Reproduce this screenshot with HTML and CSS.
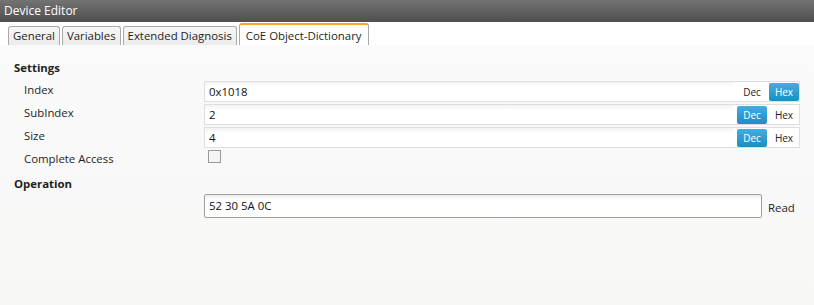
FILE: index.html
```html
<!DOCTYPE html>
<html lang="en">
<head>
    <meta charset="UTF-8">
    <meta name="viewport" content="width=device-width, initial-scale=1.0">
    <title>Device Editor</title>
    <link rel="stylesheet" href="styles.css">
</head>
<body>

<div class="titlebar">Device Editor</div>

<div class="tabs">
    <div class="tab">General</div>
    <div class="tab">Variables</div>
    <div class="tab">Extended Diagnosis</div>
    <div class="tab active">CoE Object-Dictionary</div>
</div>

<div class="content">
    <div class="section-title">Settings</div>

    <div class="row">
        <div class="label">Index</div>
        <div class="field">
            <span class="value">0x1018</span>
            <span class="toggle">
                <span class="btn">Dec</span>
                <span class="btn on">Hex</span>
            </span>
        </div>
    </div>
    <div class="row">
        <div class="label">SubIndex</div>
        <div class="field">
            <span class="value">2</span>
            <span class="toggle">
                <span class="btn on">Dec</span>
                <span class="btn">Hex</span>
            </span>
        </div>
    </div>
    <div class="row">
        <div class="label">Size</div>
        <div class="field">
            <span class="value">4</span>
            <span class="toggle">
                <span class="btn on">Dec</span>
                <span class="btn">Hex</span>
            </span>
        </div>
    </div>
    <div class="row">
        <div class="label">Complete Access</div>
        <div><span class="checkbox"></span></div>
    </div>

    <div class="section-title op-title">Operation</div>

    <div class="op-row">
        <div class="op-input">52 30 5A 0C</div>
        <div class="op-action">Read</div>
    </div>
</div>

</body>
</html>
```

FILE: styles.css
```css
html, body {
    margin: 0;
    height: 100%;
}
body {
    display: flex;
    flex-direction: column;
    font-family: "Open Sans", "Noto Sans", sans-serif;
    font-size: 11.4px;
    color: #1e1e1e;
    background-color: #f8f8f7;
    overflow: hidden;
}
.titlebar {
    height: 22px;
    line-height: 22px;
    padding-left: 4px;
    color: #fff;
    font-size: 12px;
    background: linear-gradient(#737373, #4f4f4f);
}
.tabs {
    display: flex;
    align-items: flex-end;
    height: 23px;
    padding-left: 8px;
    background-color: #fff;
}
.tab {
    height: 18px;
    line-height: 18px;
    padding: 0 4px;
    margin-right: 2px;
    border: 1px solid #a9a9a9;
    border-bottom: none;
    border-radius: 3px 3px 0 0;
    background: linear-gradient(#f7f7f7, #ececec);
}
.tab.active {
    height: 21px;
    line-height: 22px;
    padding: 0 6px;
    margin-right: 0;
    background: #fff;
    border-top: 2px solid #f5a623;
    border-color: #f5a623 #a9a9a9 #a9a9a9;
    margin-bottom: -1px;
}
.content {
    flex: 1;
    padding: 15px 14px 0 14px;
    background: linear-gradient(#fafafa, #f7f7f6);
}
.section-title {
    font-weight: bold;
    margin-bottom: 6px;
}
.op-title {
    margin-top: 9px;
    margin-bottom: 3px;
}
.row {
    display: grid;
    grid-template-columns: 180px 1fr;
    padding-left: 10px;
    margin-bottom: 2px;
}
.label {
    line-height: 16px;
    padding-top: 1px;
}
.field {
    display: flex;
    align-items: center;
    justify-content: space-between;
    height: 19px;
    border: 1px solid #dedede;
    background: linear-gradient(#f2f2f2, #fff 5px);
}
.value {
    padding-left: 4px;
    color: #111;
}
.toggle {
    display: flex;
    height: 19px;
    align-items: center;
    background: #fff;
    padding-left: 2px;
}
.btn {
    width: 30px;
    height: 18px;
    line-height: 18px;
    text-align: center;
    font-size: 10px;
    margin-left: 2px;
    color: #222;
}
.btn.on {
    color: #fff;
    border-radius: 2px;
    background: linear-gradient(#43ade0, #1d8dc4);
}
.checkbox {
    display: block;
    width: 11px;
    height: 11px;
    margin-left: 4px;
    border: 1px solid #9a9a9a;
    background: #f4f4f4;
}
.op-row {
    display: flex;
    align-items: center;
    padding-left: 190px;
    margin-top: 2px;
}
.op-input {
    width: 552px;
    height: 22px;
    line-height: 22px;
    padding-left: 4px;
    border: 1px solid #a0a0a0;
    border-radius: 2px;
    background: linear-gradient(#ececec, #fff 5px);
    color: #111;
}
.op-action {
    margin-left: 6px;
    padding-top: 2px;
}
```
